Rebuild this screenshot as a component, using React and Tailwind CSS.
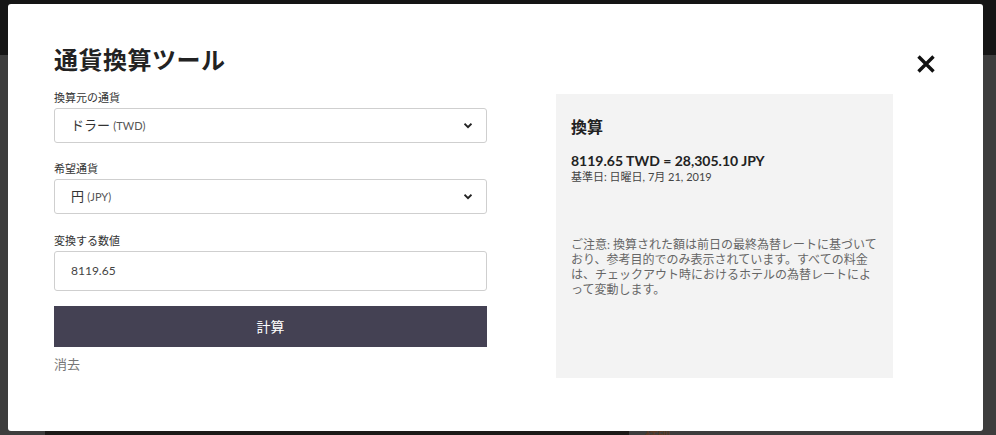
import React from 'react';

const font = { fontFamily: 'Lato, "Noto Sans CJK JP", sans-serif' };

const Chevron = () => (
  <svg width="8" height="6" viewBox="0 0 8 6" className="text-[#222]">
    <path d="M1.2 1.4 L4 4.2 L6.8 1.4" fill="none" stroke="currentColor" strokeWidth="2" strokeLinecap="square" />
  </svg>
);

const Field = ({ label, children, mt }) => (
  <div className={mt}>
    <p className="text-[11px] leading-[14px] text-[#333]">{label}</p>
    <div className="mt-[3px]">{children}</div>
  </div>
);

const Select = ({ main, code }) => (
  <div className="flex h-[35px] items-center justify-between rounded-[3px] border border-[#cfcfcf] bg-white pl-[16px] pr-[14px]">
    <span className="text-[13px] text-[#333]">
      {main} <span className="text-[11px] text-[#555]">({code})</span>
    </span>
    <Chevron />
  </div>
);

export default function App() {
  return (
    <div className="relative h-[435px] w-full overflow-hidden bg-[#3d3d3d]" style={font}>
      <div className="h-[55px] bg-[#151515]" />
      <div className="absolute bottom-0 left-[45px] h-[20px] w-[584px] bg-[#1c1a18]" />
      <div className="absolute bottom-[-8px] left-[645px] text-[13px] font-bold text-[#5a3a26]">括弧</div>

      <div className="absolute left-[8px] top-[4px] h-[427px] w-[975px] rounded-[3px] bg-white pl-[46px] pt-[41px]">
        <button className="absolute right-[47px] top-[50px] p-0">
          <svg width="20" height="20" viewBox="0 0 20 20">
            <path d="M2.5 2.5 L17.5 17.5 M17.5 2.5 L2.5 17.5" stroke="#111" strokeWidth="3.4" />
          </svg>
        </button>

        <h1 className="text-[24px] font-bold leading-[30px] tracking-[0.5px] text-[#222]">通貨換算ツール</h1>

        <div className="mt-[19px] flex">
          <div className="-mt-[3px] w-[433px]">
            <Field label="換算元の通貨">
              <Select main="ドラー" code="TWD" />
            </Field>
            <Field label="希望通貨" mt="mt-[19px]">
              <Select main="円" code="JPY" />
            </Field>
            <Field label="変換する数値" mt="mt-[20px]">
              <div className="flex h-[40px] items-center rounded-[3px] border border-[#cfcfcf] bg-white pl-[16px] text-[12px] text-[#444]">
                8119.65
              </div>
            </Field>
            <button className="mt-[15px] flex h-[41px] w-full items-center justify-center bg-[#444153] text-[14px] text-white">
              計算
            </button>
            <p className="mt-[8px] text-[13px] text-[#777]">消去</p>
          </div>

          <div className="ml-[69px] h-[284px] w-[337px] bg-[#f3f3f3] px-[15px] pt-[22px]">
            <h2 className="text-[16px] font-bold leading-[22px] text-[#222]">換算</h2>
            <p className="mt-[14px] text-[14px] font-bold leading-[18px] text-[#222]">8119.65 TWD = 28,305.10 JPY</p>
            <p className="text-[11px] leading-[14px] text-[#444]">基準日: 日曜日, 7月 21, 2019</p>
            <p className="mt-[53px] w-[310px] text-[12px] leading-[15px] text-[#666]">
              ご注意: 換算された額は前日の最終為替レートに基づいており、参考目的でのみ表示されています。すべての料金は、チェックアウト時におけるホテルの為替レートによって変動します。
            </p>
          </div>
        </div>
      </div>
    </div>
  );
}
